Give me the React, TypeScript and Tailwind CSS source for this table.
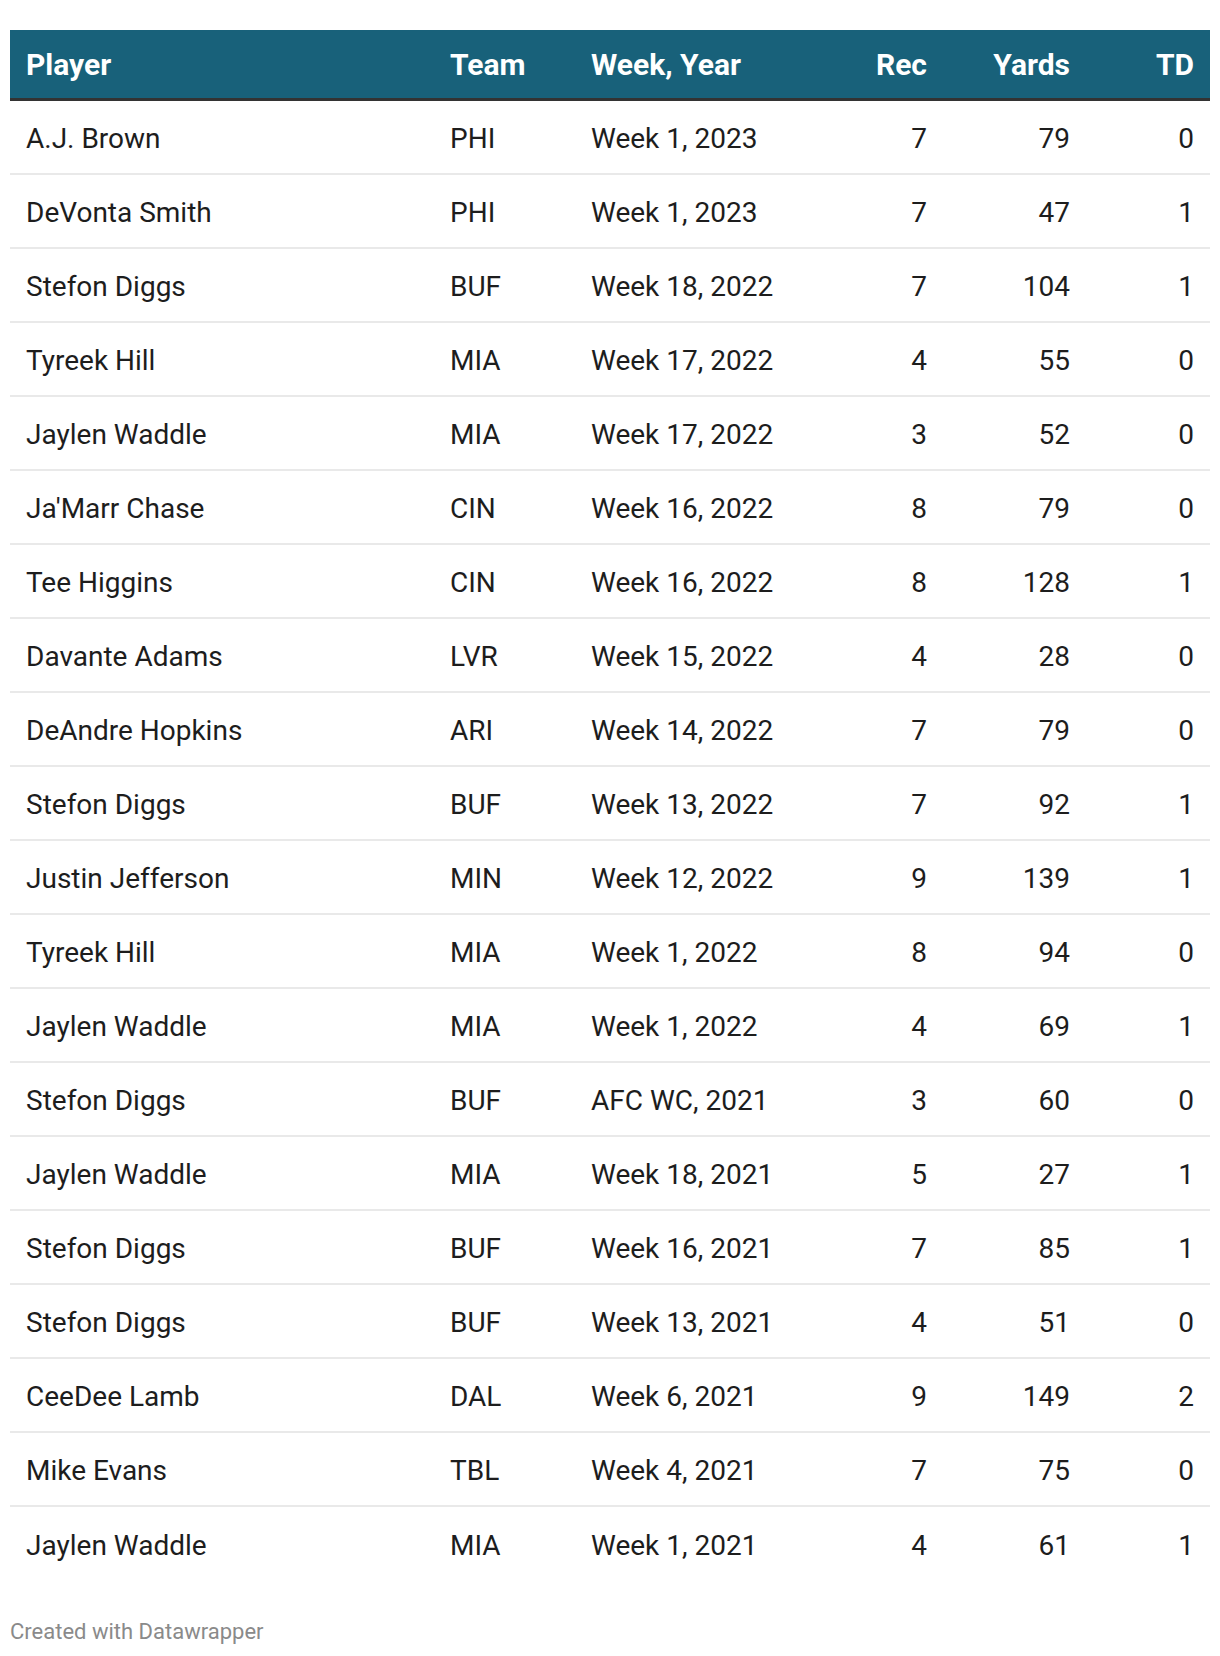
import React from 'react';

type Row = {
  player: string;
  team: string;
  week: string;
  rec: number;
  yards: number;
  td: number;
};

const rows: Row[] = [
  { player: 'A.J. Brown', team: 'PHI', week: 'Week 1, 2023', rec: 7, yards: 79, td: 0 },
  { player: 'DeVonta Smith', team: 'PHI', week: 'Week 1, 2023', rec: 7, yards: 47, td: 1 },
  { player: 'Stefon Diggs', team: 'BUF', week: 'Week 18, 2022', rec: 7, yards: 104, td: 1 },
  { player: 'Tyreek Hill', team: 'MIA', week: 'Week 17, 2022', rec: 4, yards: 55, td: 0 },
  { player: 'Jaylen Waddle', team: 'MIA', week: 'Week 17, 2022', rec: 3, yards: 52, td: 0 },
  { player: "Ja'Marr Chase", team: 'CIN', week: 'Week 16, 2022', rec: 8, yards: 79, td: 0 },
  { player: 'Tee Higgins', team: 'CIN', week: 'Week 16, 2022', rec: 8, yards: 128, td: 1 },
  { player: 'Davante Adams', team: 'LVR', week: 'Week 15, 2022', rec: 4, yards: 28, td: 0 },
  { player: 'DeAndre Hopkins', team: 'ARI', week: 'Week 14, 2022', rec: 7, yards: 79, td: 0 },
  { player: 'Stefon Diggs', team: 'BUF', week: 'Week 13, 2022', rec: 7, yards: 92, td: 1 },
  { player: 'Justin Jefferson', team: 'MIN', week: 'Week 12, 2022', rec: 9, yards: 139, td: 1 },
  { player: 'Tyreek Hill', team: 'MIA', week: 'Week 1, 2022', rec: 8, yards: 94, td: 0 },
  { player: 'Jaylen Waddle', team: 'MIA', week: 'Week 1, 2022', rec: 4, yards: 69, td: 1 },
  { player: 'Stefon Diggs', team: 'BUF', week: 'AFC WC, 2021', rec: 3, yards: 60, td: 0 },
  { player: 'Jaylen Waddle', team: 'MIA', week: 'Week 18, 2021', rec: 5, yards: 27, td: 1 },
  { player: 'Stefon Diggs', team: 'BUF', week: 'Week 16, 2021', rec: 7, yards: 85, td: 1 },
  { player: 'Stefon Diggs', team: 'BUF', week: 'Week 13, 2021', rec: 4, yards: 51, td: 0 },
  { player: 'CeeDee Lamb', team: 'DAL', week: 'Week 6, 2021', rec: 9, yards: 149, td: 2 },
  { player: 'Mike Evans', team: 'TBL', week: 'Week 4, 2021', rec: 7, yards: 75, td: 0 },
  { player: 'Jaylen Waddle', team: 'MIA', week: 'Week 1, 2021', rec: 4, yards: 61, td: 1 },
];

// column template shared by header and rows
const cols = 'grid grid-cols-[424px_141px_210px_126px_143px_124px] items-center pl-4 pr-4';

const App: React.FC = () => {
  return (
    <div className="bg-white min-h-screen px-[10px] pt-[30px] font-['Roboto',sans-serif]">
      <div className="w-[1200px]">
        {/* Header */}
        <div className={`${cols} h-[71px] bg-[#18617a] border-b-[3px] border-[#333333] text-white font-bold text-[30px]`}>
          <span>Player</span>
          <span>Team</span>
          <span>Week, Year</span>
          <span className="text-right">Rec</span>
          <span className="text-right">Yards</span>
          <span className="text-right">TD</span>
        </div>

        {/* Rows */}
        {rows.map((row, index) => (
          <div
            key={index}
            className={`${cols} h-[74px] pt-[3px] text-[28px] text-[#1d1d1d] ${
              index < rows.length - 1 ? 'border-b-2 border-[#e9e9e9]' : ''
            }`}
          >
            <span>{row.player}</span>
            <span>{row.team}</span>
            <span>{row.week}</span>
            <span className="text-right">{row.rec}</span>
            <span className="text-right">{row.yards}</span>
            <span className="text-right">{row.td}</span>
          </div>
        ))}

        {/* Footer */}
        <div className="mt-[38px] text-[22px] leading-[26px] text-[#8a8a8a]">Created with Datawrapper</div>
      </div>
    </div>
  );
};

export default App;
